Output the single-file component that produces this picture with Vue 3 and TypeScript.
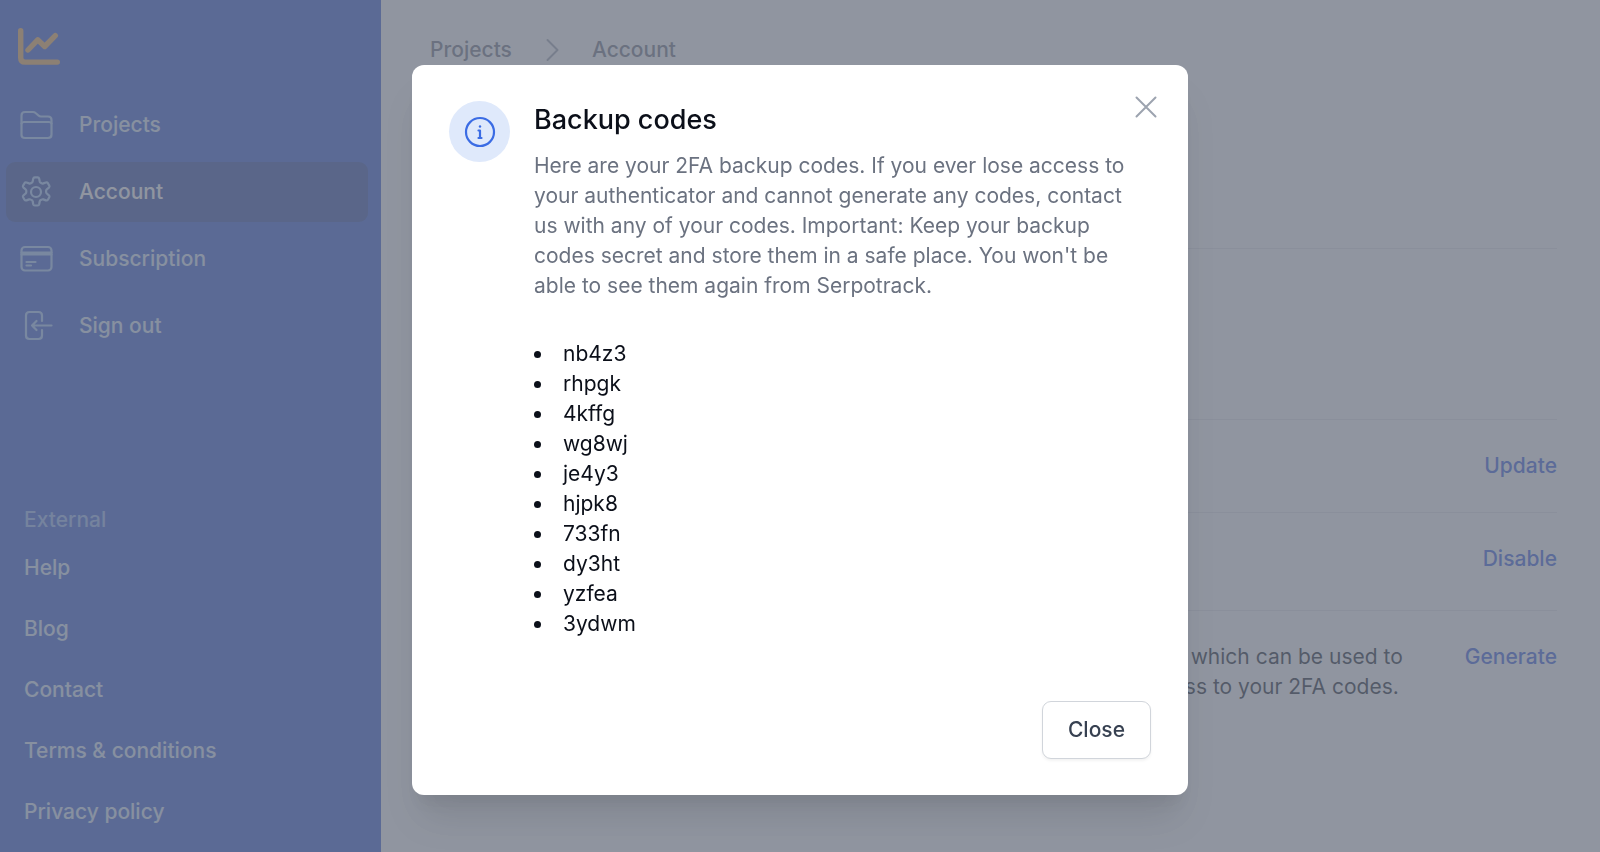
<script setup lang="ts">
import { ref } from 'vue'

interface NavItem {
  label: string
  icon: 'folder' | 'gear' | 'card' | 'exit'
  active?: boolean
}

const navItems: NavItem[] = [
  { label: 'Projects', icon: 'folder' },
  { label: 'Account', icon: 'gear', active: true },
  { label: 'Subscription', icon: 'card' },
  { label: 'Sign out', icon: 'exit' },
]

const externalLinks: string[] = ['Help', 'Blog', 'Contact', 'Terms & conditions', 'Privacy policy']

const backupCodes: string[] = [
  'nb4z3', 'rhpgk', '4kffg', 'wg8wj', 'je4y3',
  'hjpk8', '733fn', 'dy3ht', 'yzfea', '3ydwm',
]

const dialogOpen = ref(true)
</script>

<template>
  <div class="page">
    <aside class="sidebar">
      <a class="logo" href="#" aria-label="Serpotrack">
        <svg viewBox="0 0 42 37" width="42" height="37" fill="none" stroke="currentColor" stroke-width="5.4" stroke-linecap="round" stroke-linejoin="round">
          <path d="M2.700 2.700v27q0 4.400 4.400 4.400h32.200" />
          <path d="M10 22 19.700 11.800 26.700 18.500 37.300 7.700" />
        </svg>
      </a>

      <nav class="main-nav" aria-label="Main">
        <a v-for="item in navItems" :key="item.label" href="#" class="nav-item" :class="{ active: item.active }">
          <svg class="nav-icon" viewBox="0 0 36 36" fill="none" stroke="currentColor" stroke-width="2.2" stroke-linecap="round" stroke-linejoin="round">
            <template v-if="item.icon === 'folder'">
              <path d="M3.500 28V8.500q0-3.500 3.500-3.500h8q1.500 0 2.600 1L20.500 8.500q1 1 2.500 1h7q3.500 0 3.500 3.500v14.500q0 3.500-3.500 3.500H7q-3.500 0-3.500-3z" />
              <path d="M3.500 16.500q.5-1.500 2.500-1.500h25q2 0 2.500 1.500" />
            </template>
            <template v-else-if="item.icon === 'gear'">
              <circle cx="18" cy="18" r="5" />
              <path d="M15.200 4.700q.3-1.300 1.600-1.300h2.800q1.300 0 1.600 1.300l.5 2.700q.2.900 1.100 1.400l.8.500q.8.500 1.700.1l2.600-.9q1.300-.4 2 .7l1.400 2.400q.6 1.100-.4 2l-2.100 1.700q-.7.600-.7 1.600v1q0 1 .7 1.600l2.100 1.800q1 .9.400 2l-1.400 2.400q-.7 1.100-2 .7l-2.600-1q-.9-.3-1.700.200l-.8.500q-.9.400-1.100 1.400l-.5 2.700q-.3 1.300-1.600 1.300h-2.800q-1.300 0-1.600-1.300l-.5-2.700q-.1-1-1-1.400l-.9-.5q-.8-.5-1.700-.2l-2.600 1q-1.300.4-2-.7l-1.400-2.400q-.6-1.100.4-2l2.100-1.800q.8-.6.700-1.600v-1q.1-1-.7-1.600l-2.100-1.700q-1-.9-.4-2l1.400-2.400q.7-1.100 2-.7l2.600.9q.9.400 1.700-.1l.9-.5q.9-.5 1-1.400z" />
            </template>
            <template v-else-if="item.icon === 'card'">
              <rect x="3.500" y="6" width="30" height="23.500" rx="3.500" />
              <path d="M3.500 11.500h30M3.500 13.500h30M8.500 21h9M8.500 24.500H13" />
            </template>
            <template v-else>
              <path d="M24 13V7.500Q24 4 20.500 4h-9Q8 4 8 7.500v20q0 3.500 3.500 3.500h9q3.500 0 3.500-3.500V22" />
              <path d="M33.500 17.500H14M18.500 13 14 17.500 18.500 22" />
            </template>
          </svg>
          <span>{{ item.label }}</span>
        </a>
      </nav>

      <nav class="external" aria-labelledby="external-title">
        <h2 id="external-title">External</h2>
        <a v-for="link in externalLinks" :key="link" href="#">{{ link }}</a>
      </nav>
    </aside>

    <main class="content">
      <nav class="breadcrumbs" aria-label="Breadcrumb">
        <a href="#">Projects</a>
        <svg viewBox="0 0 30 30" width="30" height="30" fill="none" stroke="currentColor" stroke-width="2" stroke-linecap="round" stroke-linejoin="round">
          <path d="M10.500 5 20.500 15 10.500 25" />
        </svg>
        <a href="#">Account</a>
      </nav>

      <div class="settings">
        <div class="row profile"></div>
        <div class="row">
          <button type="button">Update</button>
        </div>
        <div class="row status">
          <button type="button">Disable</button>
        </div>
        <div class="row">
          <p>Generate 10 backup codes which can be used to<br />log in if you ever lose access to your 2FA codes.</p>
          <button type="button" @click="dialogOpen = true">Generate</button>
        </div>
      </div>
    </main>

    <div v-if="dialogOpen" class="overlay">
      <section class="dialog" role="dialog" aria-modal="true" aria-labelledby="dialog-title">
        <button class="dismiss" type="button" aria-label="Dismiss" @click="dialogOpen = false">
          <svg viewBox="0 0 36 36" width="36" height="36" fill="none" stroke="currentColor" stroke-width="2" stroke-linecap="round">
            <path d="M8.500 8.500l19 19M27.500 8.500l-19 19" />
          </svg>
        </button>
        <div class="dialog-body">
          <div class="badge">
            <svg viewBox="0 0 36 36" width="36" height="36" fill="none" stroke="currentColor" stroke-width="2.200" stroke-linecap="round" stroke-linejoin="round">
              <circle cx="18" cy="18" r="14" />
              <path d="M16.500 16.500H18v7.500M16.500 24h3" />
              <circle cx="18" cy="12.500" r="1.200" fill="currentColor" stroke="none" />
            </svg>
          </div>
          <div class="dialog-text">
            <h2 id="dialog-title">Backup codes</h2>
            <p>
              Here are your 2FA backup codes. If you ever lose access to your authenticator and cannot
              generate any codes, contact us with any of your codes. Important: Keep your backup codes
              secret and store them in a safe place. You won't be able to see them again from Serpotrack.
            </p>
            <ul>
              <li v-for="code in backupCodes" :key="code">{{ code }}</li>
            </ul>
          </div>
        </div>
        <div class="dialog-actions">
          <button class="close" type="button" @click="dialogOpen = false">Close</button>
        </div>
      </section>
    </div>
  </div>
</template>

<style>
body {
  margin: 0;
}
</style>

<style scoped>
.page {
  display: flex;
  height: 100vh;
  overflow: hidden;
  background: #fff;
  font-family: Inter, "Liberation Sans", sans-serif;
  font-size: 21px;
  line-height: 30px;
}

.page * {
  box-sizing: border-box;
}

a {
  color: inherit;
  text-decoration: none;
}

h2,
p,
ul {
  margin: 0;
  padding: 0;
}

button {
  padding: 0;
  border: 0;
  background: none;
  font: inherit;
  font-weight: 500;
  cursor: pointer;
}

svg {
  display: block;
  flex: none;
}

.sidebar {
  display: flex;
  flex: none;
  flex-direction: column;
  width: 381px;
  padding: 28px 13px 10px 6px;
  background: #2f56d3;
  color: #dbeafe;
  font-weight: 500;
}

.logo {
  align-self: flex-start;
  margin-left: 12px;
  color: #efaa50;
}

.main-nav {
  display: flex;
  flex-direction: column;
  gap: 7px;
  margin-top: 30px;
}

.nav-item {
  display: flex;
  align-items: center;
  gap: 25px;
  height: 60px;
  padding: 0 12px;
  border-radius: 9px;
}

.nav-item.active {
  background: #2946a4;
  color: #fff;
}

.nav-icon {
  width: 36px;
  height: 36px;
  color: #a4cafe;
}

.external {
  display: flex;
  flex-direction: column;
  margin-top: auto;
}

.external h2 {
  margin-bottom: 3px;
  padding: 0 18px;
  color: #93b8f5;
  font-size: 21px;
  font-weight: 500;
}

.external a {
  padding: 15px 18px;
}

.external a + a {
  margin-top: 1px;
}

.content {
  flex: 1;
  min-width: 0;
  padding: 35px 43px 0 49px;
}

.breadcrumbs {
  display: flex;
  align-items: center;
  gap: 25px;
  color: #6b7280;
  font-weight: 500;
}

.breadcrumbs svg {
  color: #9ca3af;
}

.settings {
  margin-top: 183px;
  color: #111827;
}

.row {
  display: flex;
  align-items: flex-start;
  justify-content: flex-end;
  gap: 62px;
  padding: 31px 0;
  border-top: 1px solid #e5e7eb;
}

.row.profile {
  min-height: 171px;
}

.row.status {
  min-height: 98px;
}

.row button {
  color: #3059df;
}

.overlay {
  position: fixed;
  inset: 0;
  display: flex;
  align-items: center;
  justify-content: center;
  padding-top: 8px;
  background: rgba(107, 114, 128, 0.75);
}

.dialog {
  position: relative;
  width: 100%;
  max-width: 776px;
  padding: 36px 37px;
  border-radius: 12px;
  background: #fff;
  box-shadow: 0 30px 38px -8px rgba(0, 0, 0, 0.1), 0 15px 15px -8px rgba(0, 0, 0, 0.06);
}

.dismiss {
  position: absolute;
  top: 24px;
  right: 24px;
  color: #9ca3af;
}

.dialog-body {
  display: flex;
  gap: 24px;
}

.badge {
  display: flex;
  flex: none;
  align-items: center;
  justify-content: center;
  width: 61px;
  height: 61px;
  border-radius: 50%;
  background: #dfe9fb;
  color: #3b6ce4;
}

.dialog-text {
  flex: 1;
}

.dialog-text h2 {
  color: #0b0f19;
  font-size: 27px;
  font-weight: 500;
  line-height: 38px;
}

.dialog-text p {
  margin-top: 12px;
  padding-right: 16px;
  color: #6b7280;
}

.dialog-text ul {
  margin-top: 38px;
  color: #0b0f19;
  list-style: disc inside;
}

.dialog-actions {
  display: flex;
  justify-content: flex-end;
  margin-top: 62px;
}

.close {
  padding: 13px 25px;
  border: 1px solid #d1d5db;
  border-radius: 9px;
  background: #fff;
  color: #374151;
  box-shadow: 0 2px 3px rgba(0, 0, 0, 0.05);
}
</style>
